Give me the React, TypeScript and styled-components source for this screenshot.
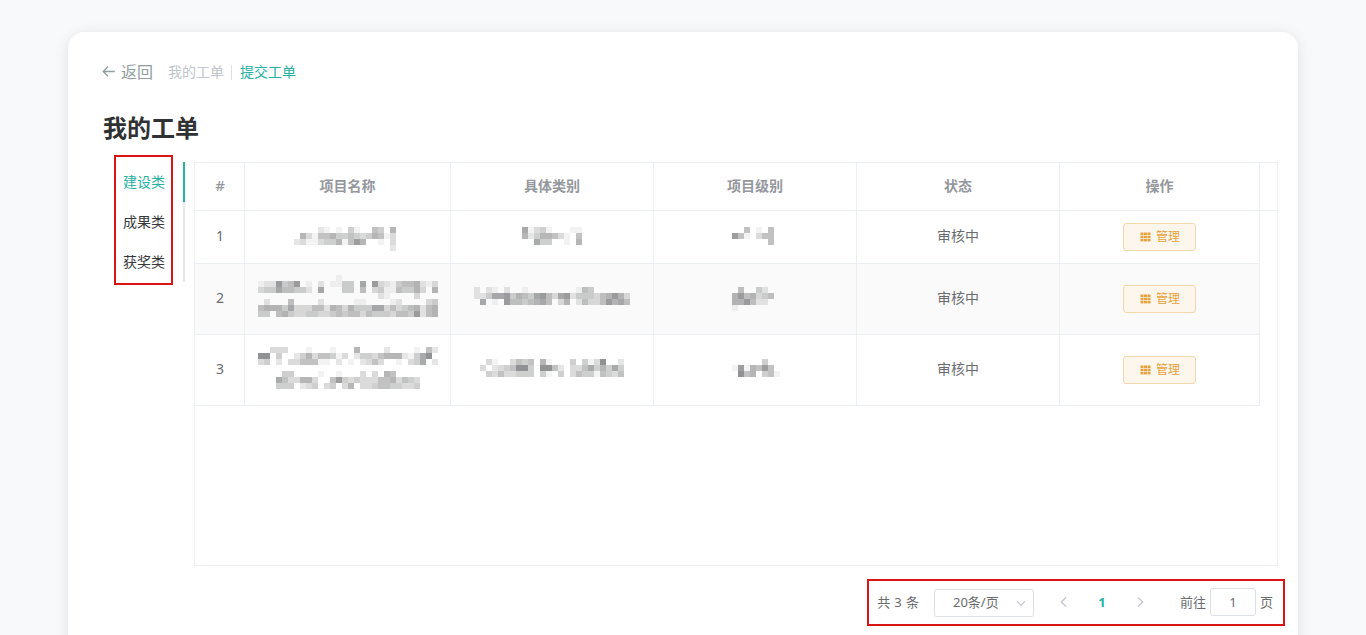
import React from "react";
import styled, { createGlobalStyle } from "styled-components";

const GlobalStyle = createGlobalStyle`
  * { box-sizing: border-box; }
  body {
    margin: 0;
    overflow: hidden;
    background: #f8f9fb;
    color: #6a6c70;
    font-family: "Noto Sans", "Noto Sans CJK SC", sans-serif;
    font-size: 14px;
  }
`;

const Page = styled.div`
  height: 635px;
  padding: 32px 68px 0;
  overflow: hidden;
`;

const Card = styled.main`
  height: 660px;
  padding: 28px 20px 0 34px;
  background: #fff;
  border-radius: 16px;
  box-shadow: 0 2px 14px rgba(0, 0, 0, 0.1);
`;

const Crumbs = styled.nav`
  display: flex;
  align-items: center;
  height: 24px;
`;

const Back = styled.a`
  display: flex;
  align-items: center;
  gap: 5px;
  margin-right: 15px;
  font-size: 16px;
  line-height: 24px;
  color: #8f9d9d;
`;

const Crumb = styled.a<{ $active?: boolean }>`
  line-height: 24px;
  color: ${(p) => (p.$active ? "#26b1a3" : "#c0c4cc")};
`;

const Divider = styled.span`
  width: 1px;
  height: 15px;
  margin: 0 8px 0 7px;
  background: #dcdfe6;
`;

const Title = styled.h1`
  height: 36px;
  margin: 26px 0 0 1px;
  font-size: 24px;
  line-height: 36px;
  font-weight: 700;
  color: #303133;
`;

const Body = styled.div`
  display: flex;
  align-items: flex-start;
  margin-top: 16px;
`;

const Tabs = styled.div`
  position: relative;
  width: 83px;
  margin-right: 9px;
`;

const Tab = styled.div<{ $active?: boolean }>`
  height: 40px;
  padding-right: 18px;
  border-right: 2px solid ${(p) => (p.$active ? "#26b1a3" : "#e4e7ed")};
  line-height: 40px;
  text-align: right;
  color: ${(p) => (p.$active ? "#26b1a3" : "#38393b")};
`;

const Outline = styled.div`
  position: absolute;
  border: 2px solid #d81414;
  pointer-events: none;
`;

const TabsOutline = styled(Outline)`
  top: -7px;
  left: 12px;
  width: 59px;
  height: 130px;
`;

const PagerOutline = styled(Outline)`
  top: -9px;
  right: -7px;
  width: 418px;
  height: 47px;
`;

const Table = styled.div`
  width: 1084px;
  height: 404px;
  border: 1px solid #ebeef5;
`;

const Row = styled.div<{ $height: number; $striped?: boolean }>`
  display: grid;
  grid-template-columns: 50px 206px 203px 203px 203px 200px;
  width: 1065px;
  height: ${(p) => p.$height}px;
  background: ${(p) => (p.$striped ? "#fafafa" : "#fff")};
`;

const HeaderRow = styled(Row)`
  grid-template-columns: 50px 206px 203px 203px 203px 200px 17px;
  width: 1082px;
  font-weight: 700;
  color: #94979c;
`;

const Cell = styled.div`
  display: flex;
  align-items: center;
  justify-content: center;
  min-width: 0;
  padding-bottom: 3px;
  border-right: 1px solid #ebeef5;
  border-bottom: 1px solid #ebeef5;
`;

const IndexCell = styled(Cell)`
  padding-left: 1px;
`;

const IndexHeading = styled(IndexCell)`
  font-size: 15px;
  font-weight: 500;
`;

const MosaicCell = styled(Cell)`
  display: block;
  padding: 0;
`;

const StatusCell = styled(Cell)`
  padding: 0 0 4px;
`;

const GutterCell = styled(Cell)`
  border-right: 0;
`;

const ManageButton = styled.button`
  display: flex;
  align-items: center;
  justify-content: center;
  gap: 5px;
  width: 73px;
  height: 28px;
  margin-top: 2px;
  padding: 0 0 0 1px;
  border: 1px solid #f2d7ab;
  border-radius: 3px;
  background: #fdf6ec;
  color: #e6a23c;
  font: inherit;
  font-size: 12px;
  line-height: 16px;
`;

const Pager = styled.div`
  position: relative;
  display: flex;
  align-items: center;
  justify-content: flex-end;
  height: 28px;
  margin-top: 22px;
  padding-right: 5px;
  font-size: 13px;
  line-height: 28px;
`;

const Total = styled.span`
  margin-right: 15px;
  word-spacing: 0.8px;
`;

const SizeSelect = styled.div`
  display: flex;
  align-items: center;
  justify-content: space-between;
  width: 100px;
  height: 28px;
  margin-right: 25px;
  padding: 0 7px 0 18px;
  border: 1px solid #dcdfe6;
  border-radius: 3px;
  transform: translateY(1px);
  line-height: 24px;
`;

const SizeValue = styled.span`
  height: 26px;
`;

const PageNumber = styled.span`
  width: 68px;
  text-align: center;
  font-weight: 700;
  color: #26b1a3;
`;

const JumpLabel = styled.span`
  margin-left: 35px;
`;

const JumpInput = styled.span`
  width: 46px;
  height: 28px;
  margin: 0 4px;
  border: 1px solid #dcdfe6;
  border-radius: 3px;
  line-height: 27px;
  text-align: center;
`;

const MosaicSvg = styled.svg`
  display: block;
`;

type Blur = { x: number; y: number; rows: string[] };

const BLOCK = 6;

// Every digit is one block of the censored text, from 0 (blank) to 9 (darkest).
function Mosaic({ width, height, blur }: { width: number; height: number; blur: Blur }) {
  return (
    <MosaicSvg width={width} height={height} shapeRendering="crispEdges">
      {blur.rows.flatMap((row, r) =>
        row.split("").map((digit, c) =>
          digit === "0" ? null : (
            <rect
              key={`${r}-${c}`}
              x={blur.x + c * BLOCK}
              y={blur.y + r * BLOCK}
              width={BLOCK}
              height={BLOCK}
              fill="#3a3b3e"
              fillOpacity={Number(digit) * 0.062}
            />
          )
        )
      )}
    </MosaicSvg>
  );
}

const columns = ["项目名称", "具体类别", "项目级别", "状态", "操作"];
const mosaicWidths = [205, 202, 202];

const orders: { height: number; blurs: Blur[] }[] = [
  {
    height: 53,
    blurs: [
      { x: 49, y: 16, rows: ["00002101041005406", "06315564454346513", "23113446158600103", "00000000000000002"] },
      { x: 71, y: 16, rows: ["7134100011", "6246653105", "0074400106"] },
      { x: 78, y: 16, rows: ["0050105", "8510355", "0000005"] },
    ],
  },
  {
    height: 71,
    blurs: [
      {
        x: 13,
        y: 11,
        rows: [
          "000000000000010000000000000000",
          "122845801020114407083214556213",
          "344755442070004405034115446306",
          "000000000000000000002100003000",
          "020005000020000011000012000034",
          "566647333552653644477353456256",
          "440564334433454553544435548256",
        ],
      },
      { x: 23, y: 23, rows: ["20210200100000000154000000", "22477846547853782444356863", "07010855456750360253358675"] },
      { x: 78, y: 23, rows: ["0500420", "6856345", "6685220", "1000000"] },
    ],
  },
  {
    height: 71,
    blurs: [
      {
        x: 13,
        y: 12,
        rows: [
          "003330001000100060000200001052",
          "990400246355413024435666214790",
          "340203355511020102353001034702",
          "000000000000000000000000000000",
          "000044000010010003030650000000",
          "000753366300584343335563543000",
          "000444023403403603345544334000",
        ],
      },
      { x: 29, y: 24, rows: ["031003545061000404139002", "302345994099520335746474", "043533444041040354415435"] },
      { x: 78, y: 24, rows: ["00000400", "18165850", "09560451"] },
    ],
  },
];

const BackArrow = () => (
  <svg width="14" height="12" viewBox="0 0 14 12" fill="none" stroke="#8f9d9d" strokeWidth="1.3">
    <path d="M12.8 5.5H1.5M6 0.7L1.2 5.5L6 10.3" />
  </svg>
);

const GridIcon = () => (
  <svg width="11" height="10" viewBox="0 0 11 10" fill="#e6a23c">
    {[0.5, 3.7, 6.9].map((y) =>
      [0.5, 4, 7.5].map((x) => <rect key={`${x}-${y}`} x={x} y={y} width="3" height="2.5" />)
    )}
  </svg>
);

const Chevron = ({ d, width, height }: { d: string; width: number; height: number }) => (
  <svg width={width} height={height} fill="none" stroke="#c0c4cc" strokeWidth="1.2">
    <path d={d} />
  </svg>
);

export default function App() {
  return (
    <>
      <GlobalStyle />
      <Page>
        <Card>
          <Crumbs>
            <Back>
              <BackArrow />
              返回
            </Back>
            <Crumb>我的工单</Crumb>
            <Divider />
            <Crumb $active>提交工单</Crumb>
          </Crumbs>
          <Title>我的工单</Title>
          <Body>
            <Tabs>
              <Tab $active>建设类</Tab>
              <Tab>成果类</Tab>
              <Tab>获奖类</Tab>
              <TabsOutline />
            </Tabs>
            <Table>
              <HeaderRow $height={48}>
                <IndexHeading>#</IndexHeading>
                {columns.map((name) => (
                  <Cell key={name}>{name}</Cell>
                ))}
                <GutterCell />
              </HeaderRow>
              {orders.map((order, i) => (
                <Row key={i} $height={order.height} $striped={i % 2 === 1}>
                  <IndexCell>{i + 1}</IndexCell>
                  {order.blurs.map((blur, c) => (
                    <MosaicCell key={c}>
                      <Mosaic width={mosaicWidths[c]} height={order.height - 1} blur={blur} />
                    </MosaicCell>
                  ))}
                  <StatusCell>审核中</StatusCell>
                  <Cell>
                    <ManageButton>
                      <GridIcon />
                      管理
                    </ManageButton>
                  </Cell>
                </Row>
              ))}
            </Table>
          </Body>
          <Pager>
            <Total>共 3 条</Total>
            <SizeSelect>
              <SizeValue>20条/页</SizeValue>
              <Chevron width={10} height={7} d="M1 1.2L5 5.4L9 1.2" />
            </SizeSelect>
            <Chevron width={9} height={12} d="M7 1.5L2.2 6L7 10.5" />
            <PageNumber>1</PageNumber>
            <Chevron width={9} height={12} d="M2 1.5L6.8 6L2 10.5" />
            <JumpLabel>前往</JumpLabel>
            <JumpInput>1</JumpInput>
            <span>页</span>
            <PagerOutline />
          </Pager>
        </Card>
      </Page>
    </>
  );
}
